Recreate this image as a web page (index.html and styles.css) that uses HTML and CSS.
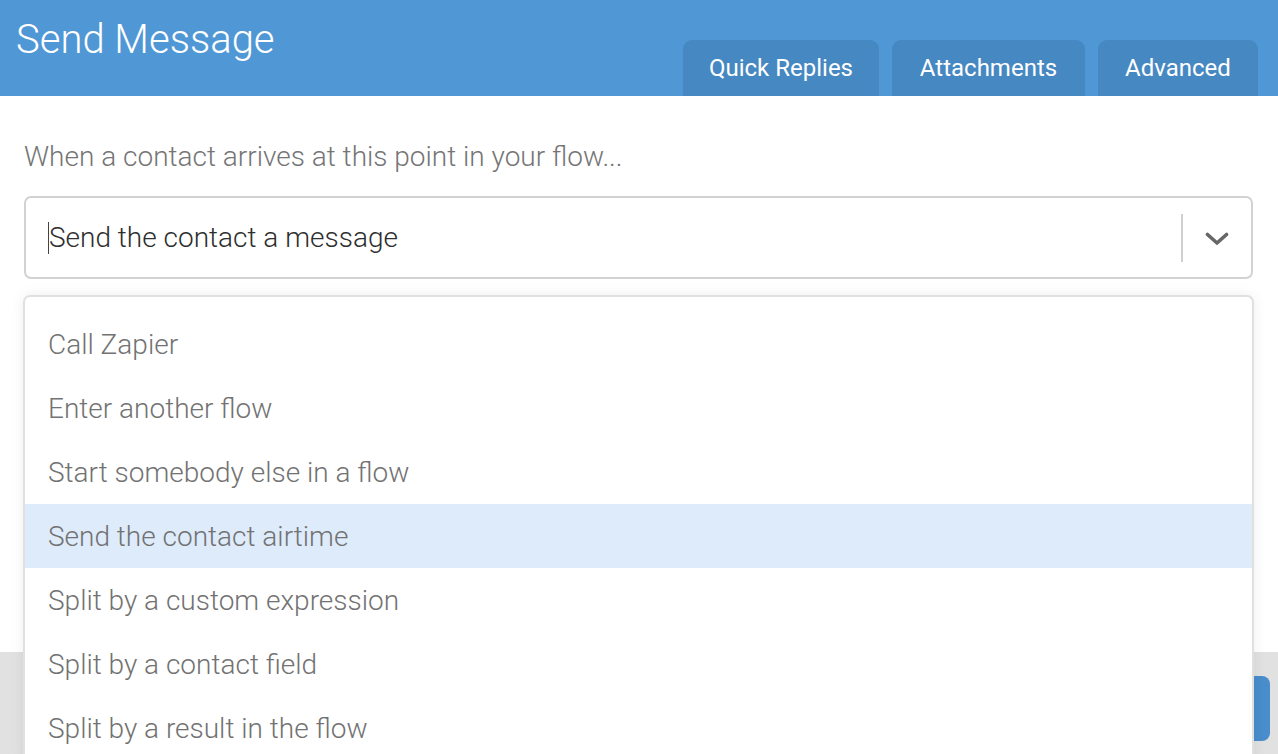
FILE: index.html
```html
<!DOCTYPE html>
<html>
<head>
<meta charset="utf-8">
<link rel="stylesheet" href="styles.css">
</head>
<body>
<div class="dialog">
  <header class="header">
    <h1 class="title">Send Message</h1>
    <nav class="tabs">
      <div class="tab tab-qr">Quick Replies</div>
      <div class="tab tab-att">Attachments</div>
      <div class="tab tab-adv">Advanced</div>
    </nav>
  </header>
  <main class="content">
    <p class="label">When a contact arrives at this point in your flow...</p>
    <div class="select">
      <div class="value"><span class="caret"></span>Send the contact a message</div>
      <div class="indicators">
        <span class="sep"></span>
        <svg class="chev" width="24" height="14" viewBox="0 0 24 14"><path d="M2.5 2.5 L12 11 L21.5 2.5" fill="none" stroke="#666" stroke-width="3.6" stroke-linecap="round" stroke-linejoin="round"/></svg>
      </div>
    </div>
  </main>
  <footer class="footer">
    <div class="btn"></div>
  </footer>
  <ul class="menu">
    <li class="item">Call Zapier</li>
    <li class="item">Enter another flow</li>
    <li class="item">Start somebody else in a flow</li>
    <li class="item active">Send the contact airtime</li>
    <li class="item">Split by a custom expression</li>
    <li class="item">Split by a contact field</li>
    <li class="item">Split by a result in the flow</li>
  </ul>
</div>
</body>
</html>
```
FILE: styles.css
```css
html, body {
  margin: 0;
  padding: 0;
  width: 1278px;
  height: 754px;
  overflow: hidden;
  background: #fff;
  font-family: Roboto, "Liberation Sans", sans-serif;
}
.dialog {
  position: relative;
  width: 1278px;
  height: 754px;
  overflow: hidden;
  display: flex;
  flex-direction: column;
}
.header {
  height: 96px;
  background: #5097d5;
  display: flex;
  justify-content: space-between;
  align-items: flex-end;
  flex-shrink: 0;
}
.title {
  align-self: flex-start;
  margin: 0;
  padding: 17px 0 0 16px;
  font-size: 40px;
  font-weight: 300;
  color: #fff;
  line-height: 46px;
}
.tabs {
  display: flex;
  gap: 13px;
  margin-right: 20px;
}
.tab {
  height: 56px;
  background: #4688c1;
  border-radius: 9px 9px 0 0;
  color: #fff;
  font-size: 24px;
  font-weight: 400;
  display: flex;
  align-items: center;
  justify-content: center;
  box-sizing: border-box;
}
.tab-qr { width: 196px; }
.tab-att { width: 193px; }
.tab-adv { width: 160px; }
.content {
  flex: 1;
  padding: 0 24px;
}
.label {
  margin: 45px 0 0 0;
  font-size: 28px;
  font-weight: 300;
  color: #757575;
  line-height: 32px;
}
.select {
  margin-top: 23px;
  height: 83px;
  border: 2px solid #d2d2d2;
  border-radius: 7px;
  box-sizing: border-box;
  display: flex;
  align-items: center;
  justify-content: space-between;
  width: 1229px;
}
.value {
  padding-left: 22px;
  font-size: 28px;
  font-weight: 300;
  color: #2e2e2e;
  display: flex;
  align-items: center;
}
.caret {
  display: inline-block;
  width: 1px;
  height: 32px;
  background: #444;
}
.indicators {
  display: flex;
  align-items: center;
  height: 100%;
}
.sep {
  width: 2px;
  height: 48px;
  background: #d0d0d0;
  margin-right: 22px;
}
.chev {
  margin-right: 22px;
  margin-top: 2px;
}
.footer {
  height: 102px;
  background: #e1e1e1;
  flex-shrink: 0;
  display: flex;
  justify-content: flex-end;
  align-items: flex-start;
}
.btn {
  margin-top: 24px;
  margin-right: 8px;
  width: 120px;
  height: 65px;
  background: #4a8dcc;
  border-radius: 8px;
}
.menu {
  position: absolute;
  top: 295px;
  left: 23px;
  width: 1231px;
  height: 470px;
  margin: 0;
  padding: 15px 0 0 0;
  list-style: none;
  box-sizing: border-box;
  background: #fff;
  border: 2px solid #e0e0e0;
  border-bottom: none;
  border-radius: 7px 7px 0 0;
  box-shadow: 0 0 14px rgba(0,0,0,0.07);
}
.item {
  height: 64px;
  display: flex;
  align-items: center;
  padding-left: 23px;
  font-size: 28px;
  font-weight: 300;
  color: #727272;
}
.item.active {
  background: #deebfb;
}
```
